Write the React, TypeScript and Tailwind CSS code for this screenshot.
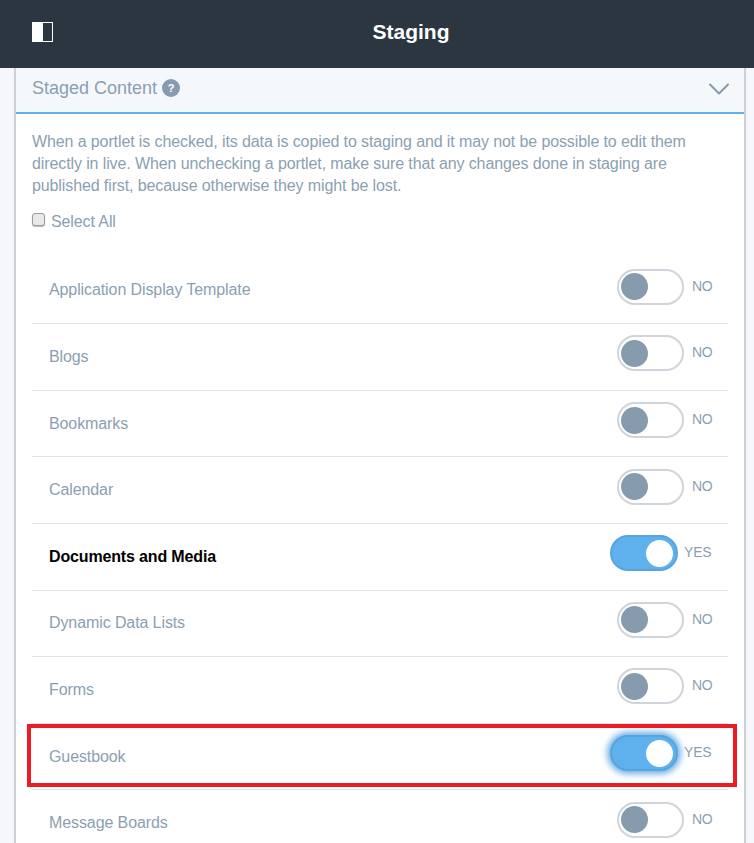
import React from 'react';
import { ChevronDown } from 'lucide-react';

const portlets = [
  { name: 'Application Display Template', on: false },
  { name: 'Blogs', on: false },
  { name: 'Bookmarks', on: false },
  { name: 'Calendar', on: false },
  { name: 'Documents and Media', on: true, bold: true },
  { name: 'Dynamic Data Lists', on: false },
  { name: 'Forms', on: false },
  { name: 'Guestbook', on: true, focus: true },
  { name: 'Message Boards', on: false },
];

const Toggle: React.FC<{ on: boolean; focus?: boolean }> = ({ on, focus }) => {
  if (on) {
    return (
      <div className="flex items-center w-[118px] -mt-[7px]">
        <div
          className={
            'w-[68px] h-[36px] rounded-full bg-[#5fb1ee] border-[2px] border-[#57a5e0] flex items-center justify-end pr-[3px] ' +
            (focus ? 'shadow-[0_0_6px_3px_#6db0e6]' : '')
          }
        >
          <div className="w-[27px] h-[27px] rounded-full bg-white" />
        </div>
        <span className="ml-[6px] -mt-[2px] text-[14px] leading-[20px] tracking-[-0.2px] text-[#8b9fb1]">YES</span>
      </div>
    );
  }
  return (
    <div className="flex items-center w-[111px] -mt-[7px]">
      <div className="w-[67px] h-[36px] rounded-full bg-white border-[2px] border-[#cfd5da] flex items-center pl-[2px]">
        <div className="w-[27px] h-[27px] rounded-full bg-[#869bad]" />
      </div>
      <span className="ml-[8px] -mt-[2px] text-[14px] leading-[20px] tracking-[-0.3px] text-[#8b9fb1]">NO</span>
    </div>
  );
};

export default function App() {
  return (
    <div className="relative h-[843px] overflow-hidden bg-[#f5f7fa] font-['Liberation_Sans',Arial,sans-serif]">
      <header className="relative h-[68px] bg-[#2b3640] flex items-center justify-center">
        <div className="absolute left-[32px] top-[22px] w-[21px] h-[20px] border border-white flex">
          <div className="w-[10px] bg-white" />
        </div>
        <h1 className="ml-[68px] -mt-[4px] text-[21px] font-bold text-white">Staging</h1>
      </header>

      <div className="ml-[14px] mr-[8px] bg-white border-x-[2px] border-x-[#cdd1d5]">
        <div className="h-[46px] bg-[#f5f8fb] border-b-[2px] border-b-[#5fb1ee] pl-[16px] pr-[16px] flex items-center justify-between">
          <div className="flex items-center gap-[5px] -mt-[4px]">
            <span className="text-[18px] text-[#8b9fb1]">Staged Content</span>
            <span className="w-[18px] h-[18px] rounded-full bg-[#869bad] text-white text-[11px] font-bold flex items-center justify-center">?</span>
          </div>
          <ChevronDown size={36} strokeWidth={1.4} className="text-[#869bad] -mt-[3px] -mr-[9px]" />
        </div>

        <div className="px-[16px] pt-[17px]">
          <p className="text-[16px] leading-[22px] tracking-[-0.11px] text-[#8b9fb1]">
            When a portlet is checked, its data is copied to staging and it may not be possible to edit them directly in live. When unchecking a portlet, make sure that any changes done in staging are published first, because otherwise they might be lost.
          </p>
          <label className="flex items-center mt-[14px] h-[22px]">
            <span className="w-[13px] h-[13px] -mt-[6px] rounded-[3px] bg-[#e9e9e9] border border-[#9a9a9a] shadow-[0_1px_1px_#bbbbbb]" />
            <span className="ml-[6px] text-[16px] tracking-[-0.1px] text-[#8b9fb1]">Select All</span>
          </label>

          <div className="mt-[24.6px]">
            {portlets.map((p) => (
              <div
                key={p.name}
                className="h-[66.6px] border-b border-b-[#dfe3e6] pl-[17px] flex items-center justify-between"
              >
                <span className={p.bold ? 'text-[16px] font-bold tracking-[-0.15px] text-black' : 'text-[16px] tracking-[-0.1px] text-[#8b9fb1]'}>
                  {p.name}
                </span>
                <Toggle on={p.on} focus={p.focus} />
              </div>
            ))}
          </div>
        </div>
      </div>

      {/* annotation box */}
      <div className="absolute left-[27px] top-[724px] w-[710px] h-[63px] border-[4px] border-[#ed1c24] pointer-events-none" />
    </div>
  );
}
